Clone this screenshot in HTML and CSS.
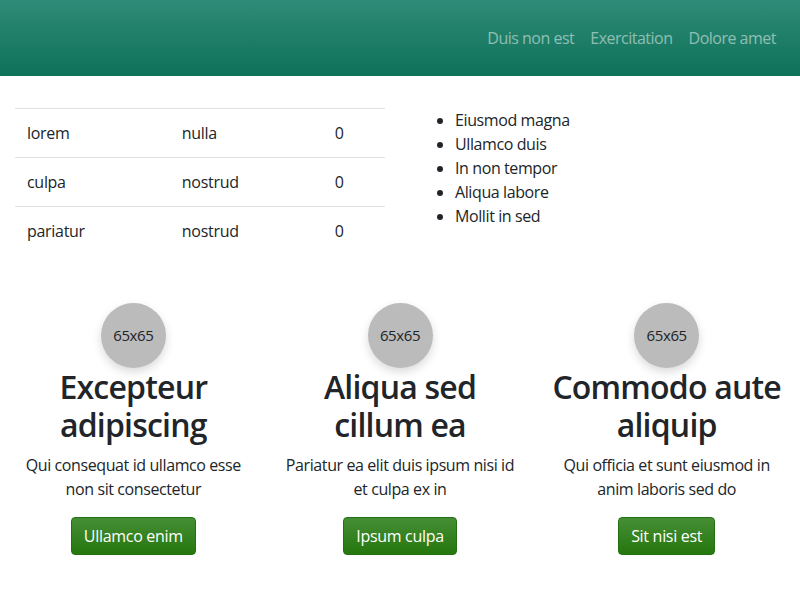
FILE: index.html
```html
<!DOCTYPE html>
<html lang="en">
<head>
<meta charset="utf-8">
<title>Page</title>
<link rel="stylesheet" href="styles.css">
</head>
<body>
<header class="topbar">
  <nav class="nav">
    <a class="nav-link" href="#">Duis non est</a>
    <a class="nav-link" href="#">Exercitation</a>
    <a class="nav-link" href="#">Dolore amet</a>
  </nav>
</header>
<main class="main">
  <section class="row top-row">
    <div class="col">
      <table class="table">
        <tbody>
          <tr><td>lorem</td><td>nulla</td><td>0</td></tr>
          <tr><td>culpa</td><td>nostrud</td><td>0</td></tr>
          <tr><td>pariatur</td><td>nostrud</td><td>0</td></tr>
        </tbody>
      </table>
    </div>
    <div class="col">
      <ul class="list">
        <li>Eiusmod magna</li>
        <li>Ullamco duis</li>
        <li>In non tempor</li>
        <li>Aliqua labore</li>
        <li>Mollit in sed</li>
      </ul>
    </div>
  </section>
  <section class="row features">
    <div class="feature">
      <div class="avatar">65x65</div>
      <h2 class="feature-title">Excepteur adipiscing</h2>
      <p class="feature-text">Qui consequat id ullamco esse non sit consectetur</p>
      <a class="btn" href="#">Ullamco enim</a>
    </div>
    <div class="feature">
      <div class="avatar">65x65</div>
      <h2 class="feature-title">Aliqua sed cillum ea</h2>
      <p class="feature-text">Pariatur ea elit duis ipsum nisi id et culpa ex in</p>
      <a class="btn" href="#">Ipsum culpa</a>
    </div>
    <div class="feature">
      <div class="avatar">65x65</div>
      <h2 class="feature-title">Commodo aute aliquip</h2>
      <p class="feature-text">Qui officia et sunt eiusmod in anim laboris sed do</p>
      <a class="btn" href="#">Sit nisi est</a>
    </div>
  </section>
</main>
</body>
</html>
```

FILE: styles.css
```css
* { box-sizing: border-box; }
html, body { margin: 0; padding: 0; }
body {
  font-family: "Open Sans", "Noto Sans", "Liberation Sans", sans-serif;
  font-size: 16px;
  line-height: 1.5;
  color: #212529;
  background: #fff;
}
.topbar {
  height: 76px;
  background: linear-gradient(to bottom, #2e8b77, #0e7159);
  display: flex;
  align-items: center;
  justify-content: flex-end;
  padding: 0 16px;
}
.nav { display: flex; }
.nav-link {
  color: rgba(255, 255, 255, 0.5);
  text-decoration: none;
  padding: 0 8px;
  letter-spacing: -0.5px;
}
.main { padding-top: 32px; }
.row { display: flex; }
.top-row .col { flex: 1 1 0; padding: 0 15px; }
.table {
  width: 100%;
  border-collapse: collapse;
  margin-bottom: 16px;
}
.table td {
  padding: 12px;
  border-top: 1px solid #dee2e6;
  vertical-align: top;
  letter-spacing: -0.3px;
}
.list {
  margin: 0;
  padding-left: 40px;
  letter-spacing: -0.4px;
}
.features { margin-top: 32px; }
.feature {
  flex: 1 1 0;
  padding: 0 15px;
  text-align: center;
}
.avatar {
  width: 65px;
  height: 65px;
  border-radius: 50%;
  background: #bbbbbb;
  margin: 0 auto;
  display: flex;
  align-items: center;
  justify-content: center;
  font-size: 15px;
  letter-spacing: -0.4px;
  box-shadow: 0 4px 10px rgba(0, 0, 0, 0.15);
}
.feature-title {
  margin: 0 0 8px;
  font-size: 32px;
  font-weight: 600;
  line-height: 1.2;
  letter-spacing: -0.8px;
}
.feature-text {
  margin: 0 0 16px;
  letter-spacing: -0.4px;
}
.btn {
  display: inline-block;
  padding: 6px 12px;
  color: #fff;
  text-decoration: none;
  border: 1px solid #22700f;
  border-radius: 4px;
  background: linear-gradient(to bottom, #468e35, #25770e);
  letter-spacing: -0.3px;
}
```
